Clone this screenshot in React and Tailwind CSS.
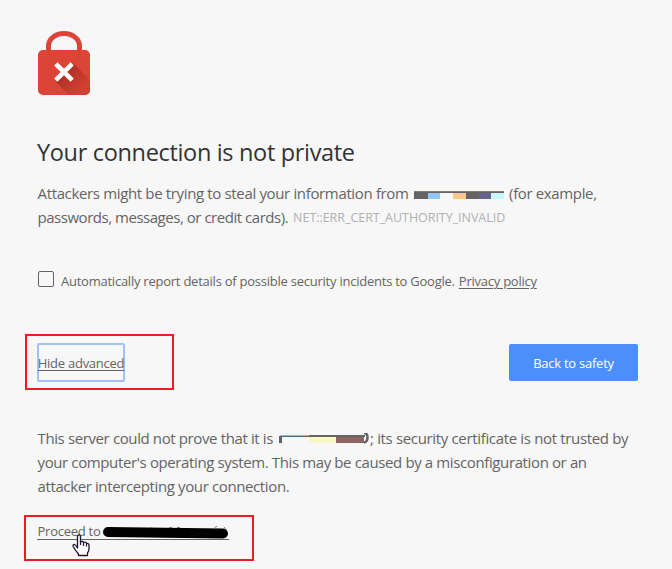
import React from 'react';

const LockIcon = () => (
  <svg width="54" height="66" viewBox="0 0 54 66" className="block">
    <defs>
      <linearGradient id="lockShadow" x1="24" y1="36" x2="46" y2="58" gradientUnits="userSpaceOnUse">
        <stop offset="0" stopColor="#a52c22" />
        <stop offset="1" stopColor="#d23f33" />
      </linearGradient>
      <clipPath id="lockBody">
        <rect x="1" y="20" width="52" height="45" rx="5" />
      </clipPath>
    </defs>
    <path d="M11.5 24V16A15.5 12.5 0 0 1 42.5 16V24" fill="none" stroke="#db4437" strokeWidth="5" />
    <rect x="1" y="20" width="52" height="45" rx="5" fill="#db4437" />
    <path d="M36 33L64 61V75H42L18.5 51.5L27 42Z" fill="url(#lockShadow)" clipPath="url(#lockBody)" />
    <path d="M18.8 33.8L35.2 50.2M35.2 33.8L18.8 50.2" stroke="#fff" strokeWidth="4.6" />
  </svg>
);

const HostBar = () => (
  <svg width="90" height="9" viewBox="0 0 90 9" className="ml-[5.5px] mr-[5px] mt-[2px] shrink-0">
    <rect width="14" height="8" y="1" fill="#646464" />
    <rect x="14" width="12" height="8" y="1" fill="#90c7f8" />
    <rect x="39" width="13" height="8" y="1" fill="#f7c78e" />
    <rect x="52" width="13" height="8" y="1" fill="#646464" />
    <rect x="65" width="12" height="8" y="1" fill="#64648e" />
    <rect x="77" width="13" height="8" y="1" fill="#c7f7f7" />
    <rect width="90" height="1" y="1" fill="#8b7770" />
    <rect x="14" width="76" height="1" y="2" fill="#6b6262" />
  </svg>
);

const ServerBar = () => (
  <svg width="91" height="12" viewBox="0 0 91 12" className="ml-[6px] mt-[2px] shrink-0">
    <rect y="3" width="3" height="7" fill="#646464" />
    <rect x="30" y="4" width="27" height="6" fill="#f7f7c7" />
    <rect x="57" y="4" width="28" height="6" fill="#8e6464" />
    <rect x="1" y="2" width="30" height="1" fill="#dda77b" />
    <rect y="3" width="86" height="1" fill="#646464" />
    <rect x="30" y="2" width="56" height="2" fill="#646464" />
    <path d="M85 0Q88.5 0 88.5 4.5T85 9.5" fill="none" stroke="#646464" strokeWidth="2.5" />
  </svg>
);

const Marker = ({ className }) => (
  <div className={`absolute border-2 border-[#ed1c24] pointer-events-none ${className}`} />
);

const HandCursor = () => (
  <svg width="18" height="23" viewBox="0 0 18 23" className="absolute left-[35px] top-[12px]">
    <path
      d="M5.5 14V2.5Q5.5 .8 7 .8T8.5 2.5V8Q11 6.5 11.5 8.5Q14 7.5 14.5 9.5Q17 9 17 11.5V15Q17 17 15.5 19V21.5H6.5V20Q3 16 1.2 12.5Q.5 10.5 2.5 10.5Q4 11 5.5 14Z"
      fill="#fff"
      stroke="#15152b"
      strokeWidth="1.3"
      strokeLinejoin="round"
    />
    <path d="M8.5 7V11M11.5 8.5V12M14.5 9.5V12.5" stroke="#15152b" strokeWidth="1.2" />
  </svg>
);

const Line = ({ className, children }) => (
  <div className={`flex items-center h-6 whitespace-pre ${className || ''}`}>{children}</div>
);

const App = () => (
  <div className="w-[672px] h-[569px] overflow-hidden bg-[#f7f7f7] pl-[37px] pr-[34px] pt-[30px] font-['Open_Sans','Noto_Sans',sans-serif] text-[#646464]">
    <LockIcon />

    <h1 className="mt-[40px] h-8 leading-8 whitespace-nowrap text-[23.5px] tracking-[-0.33px] text-[#333]">
      Your connection is not private
    </h1>

    <div className="mt-[13px] pl-[0.5px] text-[15px]">
      <Line>
        <span className="tracking-[-0.35px]">Attackers might be trying to steal your information from</span>
        <HostBar />
        <span className="tracking-[-0.36px]">(for example,</span>
      </Line>
      <Line>
        <span className="tracking-[-0.47px]">passwords, messages, or credit cards).</span>
        <span className="ml-[5px] pt-[3px] text-[12.5px] tracking-[-0.04px] text-[#b0b0b0]">NET::ERR_CERT_AUTHORITY_INVALID</span>
      </Line>
    </div>

    <label className="mt-[43px] flex items-center h-5 text-[13px] tracking-[-0.24px] whitespace-nowrap">
      <input type="checkbox" className="appearance-none w-4 h-4 ml-[1px] mr-[7px] -mt-[6px] border border-[#646464] rounded-[2px]" />
      <span>Automatically report details of possible security incidents to Google.</span>
      <a className="ml-1 underline underline-offset-2" href="#">Privacy policy</a>
    </label>

    <div className="relative mt-[51px] flex items-center justify-between h-[39px] text-[13px] tracking-[-0.25px]">
      <Marker className="-left-[12px] -top-[9px] w-[149px] h-[56px]" />
      <button className="w-[88px] h-[39px] pt-[2px] border-2 border-[#a1c1f7] rounded-[2px] flex items-center justify-center whitespace-nowrap underline underline-offset-2">
        Hide advanced
      </button>
      <button className="w-[129px] h-[37px] pt-[2px] rounded-[2px] bg-[#4c8ffb] text-white">Back to safety</button>
    </div>

    <div className="mt-[44px] pl-[0.5px] text-[15px] tracking-[-0.38px]">
      <Line>
        <span>This server could not prove that it is</span>
        <ServerBar />
        <span className="tracking-[-0.34px]">; its security certificate is not trusted by</span>
      </Line>
      <Line>your computer's operating system. This may be caused by a misconfiguration or an</Line>
      <Line>attacker intercepting your connection.</Line>
    </div>

    <div className="relative mt-[24px] h-5 flex items-center text-[13px] tracking-[-0.25px]">
      <Marker className="-left-[13px] -top-[7px] w-[230px] h-[46px]" />
      <a className="flex items-center border-b border-[#646464] h-[15px] whitespace-pre" href="#">
        <span className="w-[66px] pl-[0.5px]">Proceed to</span>
        <svg width="126" height="20" viewBox="0 0 126 20" className="block shrink-0 overflow-visible">
          <path d="M5 10L120 11.5" stroke="#000" strokeWidth="10" strokeLinecap="round" />
          <path d="M47 5.5H49M66 5.5H69M74 5.5H77M112 7V5.5Q112 4.5 114 4.5M121 5L123 7.5" fill="none" stroke="#777" strokeWidth="1" />
        </svg>
      </a>
      <HandCursor />
    </div>
  </div>
);

export default App;
